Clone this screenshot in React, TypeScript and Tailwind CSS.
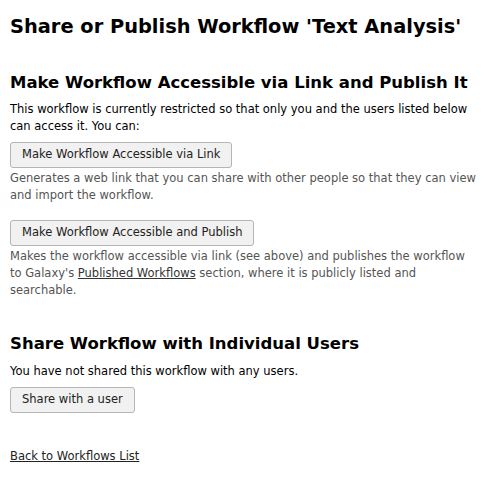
const Btn = ({ label }: { label: string }) => (
  <button className="h-[26px] rounded-[3px] border border-solid border-[#b5b5b5] bg-[#f1f1f1] px-[11px] text-[11.5px] leading-none text-[#222]">
    {label}
  </button>
);

export default function App() {
  return (
    <div className="bg-white pl-[10px] pr-[8px] pt-[15px] font-['DejaVu_Sans',sans-serif] text-[11.5px] leading-[17px] text-black">
      <h1 className="text-[19.4px] font-bold leading-[24px]">Share or Publish Workflow 'Text Analysis'</h1>

      <h2 className="mt-[34px] text-[16.5px] font-bold leading-[20px]">Make Workflow Accessible via Link and Publish It</h2>
      <p className="mt-[8px]">
        This workflow is currently restricted so that only you and the users listed below can access it. You can:
      </p>
      <div className="mt-[7px] flex">
        <Btn label="Make Workflow Accessible via Link" />
      </div>
      <p className="mt-[2px] text-[#555]">
        Generates a web link that you can share with other people so that they can view and import the workflow.
      </p>
      <div className="mt-[16px] flex">
        <Btn label="Make Workflow Accessible and Publish" />
      </div>
      <p className="mt-[2px] max-w-[462px] text-[#555]">
        Makes the workflow accessible via link (see above) and publishes the workflow to Galaxy's{" "}
        <a href="#" className="text-[#333] underline">Published Workflows</a> section, where it is publicly listed and searchable.
      </p>

      <h2 className="mt-[35px] text-[16.5px] font-bold leading-[20px]">Share Workflow with Individual Users</h2>
      <p className="mt-[9px]">You have not shared this workflow with any users.</p>
      <div className="mt-[7px] flex">
        <Btn label="Share with a user" />
      </div>

      <p className="mt-[35px]">
        <a href="#" className="text-[#222] underline">Back to Workflows List</a>
      </p>
    </div>
  );
}
